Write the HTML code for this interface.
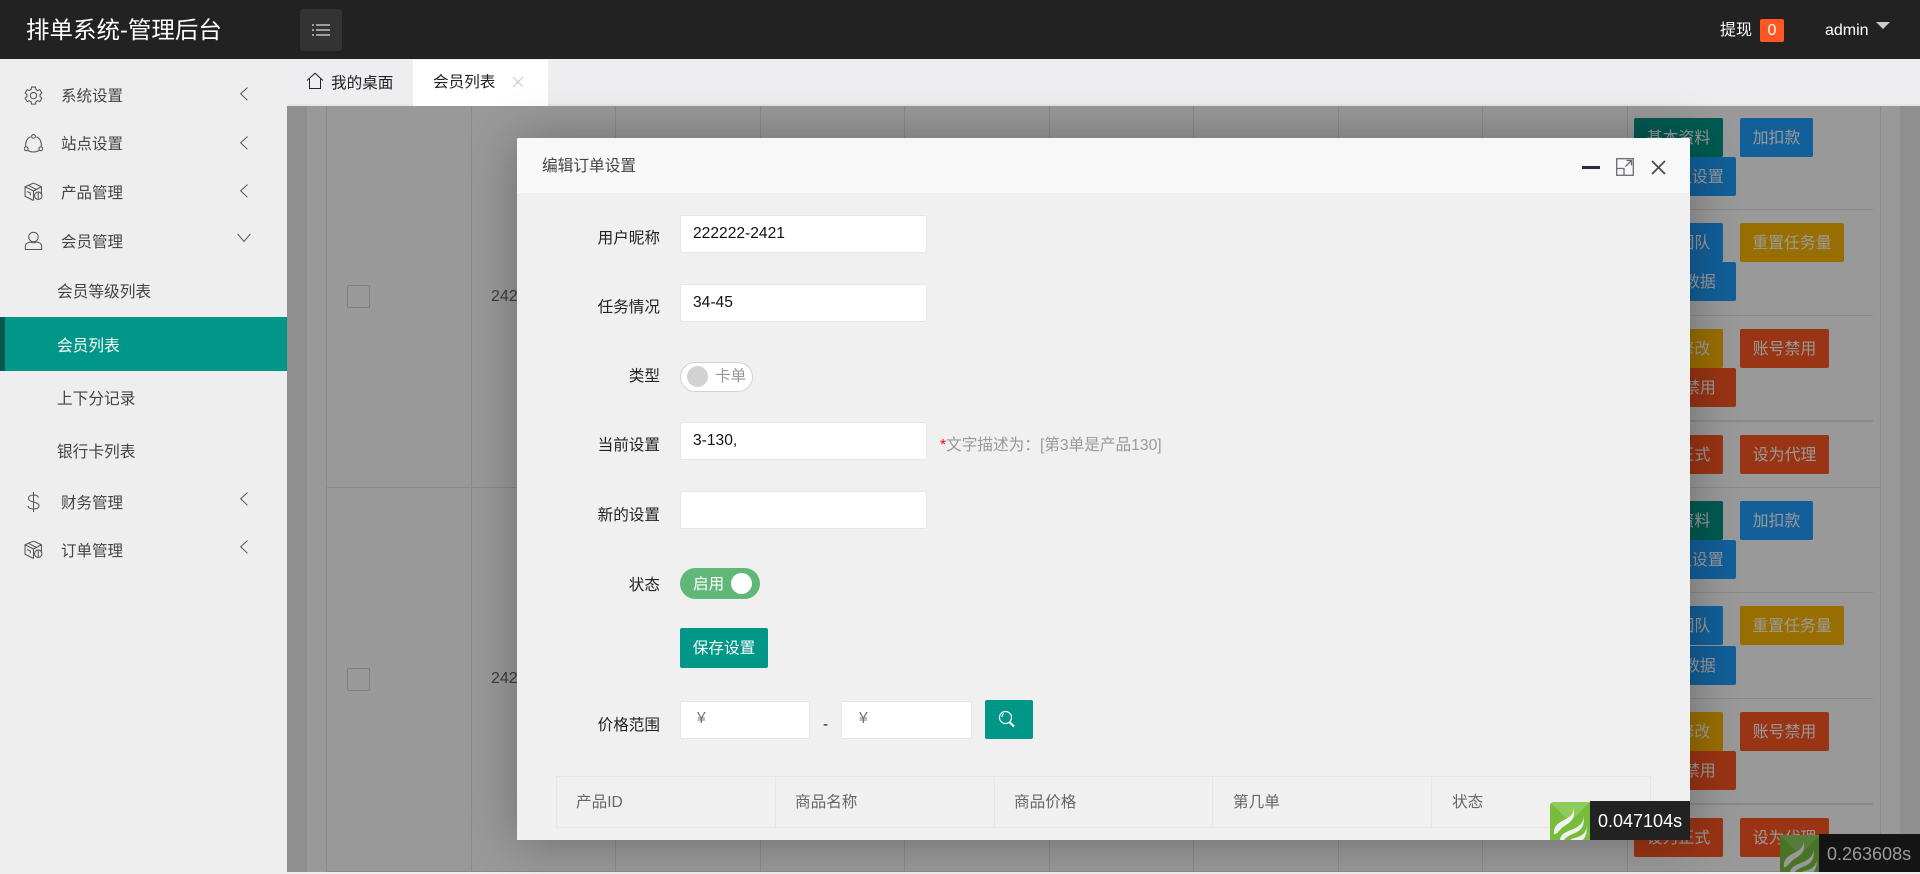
<!DOCTYPE html>
<html lang="zh"><head><meta charset="utf-8"><title>排单系统-管理后台</title>
<style>
html,body{margin:0;padding:0;width:1920px;height:872px;overflow:hidden;background:#eee;font-family:"Liberation Sans","Noto Sans CJK SC",sans-serif;color:#333}
div,span,svg{position:absolute;box-sizing:border-box}
.t{white-space:nowrap;line-height:30px;height:30px}
.m{font-size:15.5px;color:#444}
.s{font-size:15.7px;color:#444}
.l{font-size:15.6px;color:#222;text-align:right;width:120px;left:540px}
.in{background:#fff;border:1px solid #e6e6e6;border-radius:2px;height:38px}
.v{font-size:15.6px;color:#111;left:693px}
.b{height:39px;line-height:41px;border-radius:2px;color:#fff;font-size:15.9px;text-align:center;white-space:nowrap}
.g{background:#009688}.bl{background:#1E9FFF}.o{background:#FFB800}.r{background:#FF5722}
.vl{top:106px;bottom:0;width:1px;background:#e6e6e6}
.hl{left:1627px;width:246px;height:1px;background:#e6e6e6}
.th{font-size:15.6px;color:#666;top:788px}
svg.ic{fill:none;stroke:#555;stroke-width:1}
</style></head><body>
<!-- header -->
<div style="left:0;top:0;width:1920px;height:59px;background:#222"></div>
<div class="t" style="left:26px;top:15px;font-size:23.5px;color:#fff">排单系统-管理后台</div>
<div style="left:300px;top:9px;width:42px;height:42px;background:#333;border-radius:3px"></div>
<svg style="left:311px;top:23px" width="20" height="14" fill="none" stroke="#ddd" stroke-width="1.2"><path d="M5 2h14M5 7h14M5 12h14M1 2h2M1 7h2M1 12h2"/></svg>
<div class="t" style="left:1720px;top:16px;font-size:16px;color:#fff">提现</div>
<div style="left:1760px;top:19px;width:24px;height:23px;background:#FF5722;border-radius:2px;color:#fff;font-size:16px;line-height:23px;text-align:center">0</div>
<div class="t" style="left:1825px;top:16px;font-size:16px;color:#fff">admin</div>
<svg style="left:1876px;top:22px" width="14" height="8"><path d="M0 0h14L7 7z" fill="#ccc"/></svg>

<!-- sidebar -->
<div style="left:0;top:59px;width:287px;height:813px;background:#eee"></div>
<svg class="ic" style="left:24px;top:86px" width="19" height="19" viewBox="0 0 18 18"><path d="M7.2 1h3.6l.5 2.3 1.6.9 2.2-.7 1.8 3.1-1.7 1.6v1.8l1.7 1.6-1.8 3.1-2.2-.7-1.6.9-.5 2.3H7.2l-.5-2.3-1.6-.9-2.2.7-1.8-3.1 1.7-1.6V8.2L1.1 6.6l1.8-3.1 2.2.7 1.6-.9z"/><circle cx="9" cy="9.1" r="3"/></svg>
<div class="t m" style="left:61px;top:82px">系统设置</div>
<svg class="ic" style="left:24px;top:134px" width="19" height="19" viewBox="0 0 18 18"><path d="M6.3 2.6C3.2 3.8 1.4 6.6 1.6 11.8M11.7 2.6c3.100 1.200 4.900 4 4.700 9.200M3.500 15.300c3 2.300 8 2.300 11 0"/><circle cx="9" cy="2.200" r="1.800"/><circle cx="2" cy="14" r="1.800"/><circle cx="16" cy="14" r="1.800"/></svg>
<div class="t m" style="left:61px;top:130px">站点设置</div>
<svg class="ic" style="left:24px;top:182px" width="19" height="19" viewBox="0 0 18 18"><path d="M9 1l7.500 3.500V12M9 1L1 4.500v9L9 17.500M1 4.500L9 8.500l7.500-4M9 8.500v9M4 3l7.500 4M3 9l3 1.500v2"/><circle cx="13.500" cy="13" r="3.500"/><path d="M13.500 9.500v7"/></svg>
<div class="t m" style="left:61px;top:179px">产品管理</div>
<svg class="ic" style="left:24px;top:231px" width="19" height="19" viewBox="0 0 18 19"><circle cx="9" cy="6" r="4.800"/><path d="M.8 18.500v-3C.8 13 3 11.500 5.500 11c2.200 1 4.800 1 7 0 2.500.5 4.700 2 4.700 4.500v3z"/></svg>
<div class="t m" style="left:61px;top:228px">会员管理</div>
<svg class="ic" style="left:240px;top:87px" width="8" height="14"><path d="M7.500.5L.7 6.800l6.800 6.500"/></svg>
<svg class="ic" style="left:240px;top:136px" width="8" height="14"><path d="M7.500.5L.7 6.800l6.800 6.500"/></svg>
<svg class="ic" style="left:240px;top:184px" width="8" height="14"><path d="M7.500.5L.7 6.800l6.800 6.500"/></svg>
<svg class="ic" style="left:237px;top:233px" width="14" height="10"><path d="M.5.800L7 8.500 13.500.8"/></svg>
<div class="t s" style="left:57px;top:278px">会员等级列表</div>
<div style="left:0;top:317px;width:287px;height:54px;background:#009688"></div>
<div style="left:0;top:317px;width:5px;height:54px;background:#04584f"></div>
<div class="t s" style="left:57px;top:332px;color:#fff">会员列表</div>
<div class="t s" style="left:57px;top:385px">上下分记录</div>
<div class="t s" style="left:57px;top:438px">银行卡列表</div>
<svg class="ic" style="left:27px;top:492px" width="13" height="20" viewBox="0 0 13 20"><path d="M11.500 5.500C11 3.500 9 3 6.500 3S1.500 4 1.500 6.300 4 9.300 6.500 10s5.500 1.500 5.500 3.800-2.500 3.200-5.500 3.200-5-1-5.500-3M6.500 0v20"/></svg>
<div class="t m" style="left:61px;top:489px">财务管理</div>
<svg class="ic" style="left:240px;top:492px" width="8" height="14"><path d="M7.500.5L.7 6.800l6.800 6.500"/></svg>
<svg class="ic" style="left:24px;top:540px" width="19" height="19" viewBox="0 0 18 18"><path d="M9 1l7.500 3.500V12M9 1L1 4.500v9L9 17.500M1 4.500L9 8.500l7.500-4M9 8.500v9M4 3l7.500 4M3 9l3 1.500v2"/><circle cx="13.500" cy="13" r="3.500"/><path d="M13.500 9.500v7"/></svg>
<div class="t m" style="left:61px;top:537px">订单管理</div>
<svg class="ic" style="left:240px;top:540px" width="8" height="14"><path d="M7.500.5L.7 6.800l6.800 6.500"/></svg>

<!-- tabs -->
<div style="left:287px;top:59px;width:1633px;height:47px;background:#eeeef0;border-bottom:2px solid #e6e6e6"></div>
<svg style="left:306px;top:72px" width="18" height="18" viewBox="0 0 18 18" fill="none" stroke="#222" stroke-width="1"><path d="M1 8.500L9 1.200l8 7.300M3.500 7v9.500h11V7"/></svg>
<div class="t" style="left:331px;top:69px;font-size:15.6px;color:#222">我的桌面</div>
<div style="left:413px;top:60px;width:135px;height:46px;background:#fff"></div>
<div class="t" style="left:433px;top:68px;font-size:15.6px;color:#222">会员列表</div>
<svg style="left:512px;top:76px" width="12" height="12" fill="none" stroke="#ccc" stroke-width="1.200"><path d="M1 1l10 10M11 1L1 11"/></svg>

<!-- content under overlay -->
<div style="left:287px;top:106px;width:1633px;height:766px;background:#eee"></div>
<div style="left:307px;top:106px;width:1593px;height:766px;background:#fff"></div>
<div class="vl" style="left:326px"></div><div class="vl" style="left:471px"></div><div class="vl" style="left:615px"></div><div class="vl" style="left:760px"></div><div class="vl" style="left:904px"></div><div class="vl" style="left:1049px"></div><div class="vl" style="left:1193px"></div><div class="vl" style="left:1338px"></div><div class="vl" style="left:1482px"></div><div class="vl" style="left:1627px"></div><div class="vl" style="left:1880px"></div>
<div style="left:326px;top:487px;width:1554px;height:1px;background:#e6e6e6"></div>
<div style="left:326px;top:871px;width:1554px;height:1px;background:#e6e6e6"></div>
<div class="hl" style="top:209px"></div><div class="hl" style="top:315px"></div><div class="hl" style="top:420px;height:2px"></div>
<div class="hl" style="top:592px"></div><div class="hl" style="top:698px"></div><div class="hl" style="top:803px;height:2px"></div>
<div style="left:347px;top:285px;width:23px;height:23px;border:1px solid #d2d2d2;border-radius:2px;background:#fff"></div>
<div style="left:347px;top:668px;width:23px;height:23px;border:1px solid #d2d2d2;border-radius:2px;background:#fff"></div>
<div class="t" style="left:491px;top:282px;font-size:16px;color:#666">2421</div>
<div class="t" style="left:491px;top:664px;font-size:16px;color:#666">2421</div>

<div class="b g" style="left:1634px;top:118px;width:89px">基本资料</div>
<div class="b bl" style="left:1740px;top:118px;width:73px">加扣款</div>
<div class="b bl" style="left:1632px;top:157px;width:104px">订单组设置</div>
<div class="b bl" style="left:1634px;top:223px;width:89px">查看团队</div>
<div class="b o" style="left:1740px;top:223px;width:104px">重置任务量</div>
<div class="b bl" style="left:1632px;top:262px;width:104px">今日数据</div>
<div class="b o" style="left:1634px;top:329px;width:89px">密码修改</div>
<div class="b r" style="left:1740px;top:329px;width:89px">账号禁用</div>
<div class="b r" style="left:1632px;top:368px;width:104px">接单禁用</div>
<div class="b r" style="left:1634px;top:435px;width:89px">设为正式</div>
<div class="b r" style="left:1740px;top:435px;width:89px">设为代理</div>

<div class="b g" style="left:1634px;top:501px;width:89px">基本资料</div>
<div class="b bl" style="left:1740px;top:501px;width:73px">加扣款</div>
<div class="b bl" style="left:1632px;top:540px;width:104px">订单组设置</div>
<div class="b bl" style="left:1634px;top:606px;width:89px">查看团队</div>
<div class="b o" style="left:1740px;top:606px;width:104px">重置任务量</div>
<div class="b bl" style="left:1632px;top:646px;width:104px">今日数据</div>
<div class="b o" style="left:1634px;top:712px;width:89px">密码修改</div>
<div class="b r" style="left:1740px;top:712px;width:89px">账号禁用</div>
<div class="b r" style="left:1632px;top:751px;width:104px">接单禁用</div>
<div class="b r" style="left:1634px;top:818px;width:89px">设为正式</div>
<div class="b r" style="left:1740px;top:818px;width:89px">设为代理</div>

<!-- bottom trace widget under overlay -->
<svg style="left:1780px;top:835px" width="40" height="37" viewBox="0 0 40 37"><rect width="40" height="37" fill="#7ac143"/><path d="M0 0h40L20 20z" fill="#92cf5f"/><path d="M23 6C24 12 20 15 14 18 8 21 3 25 4 32 7 33 9 28 13 25 19 21 27 17 23 6Z" fill="#fff"/><path d="M33 13C35 20 29 25 21 28 15 30 10 33 10 38L14 38C16 35 20 33 25 31 30 29 36 24 33 13Z" fill="#fff"/><path d="M36 24C37 30 33 33 28 35 24 36 20 37 18 40H30C35 37 38 31 36 24Z" fill="#fff"/></svg>
<div style="left:1819px;top:834px;width:101px;height:38px;background:#222;color:#fff;font-size:18px;line-height:40px;padding-left:8px">0.263608s</div>

<!-- overlay -->
<div style="left:287px;top:106px;width:1633px;height:766px;background:rgba(0,0,0,.4)"></div>

<!-- modal -->
<div style="left:517px;top:138px;width:1173px;height:702px;background:#f0f0f0;box-shadow:1px 1px 50px rgba(0,0,0,.3);border-radius:2px 2px 0 0;overflow:hidden">
<div style="left:0;top:0;width:1173px;height:56px;background:#f8f8f8;border-bottom:1px solid #eee"></div>
</div>
<div class="t" style="left:542px;top:152px;font-size:15.7px;color:#444">编辑订单设置</div>
<div style="left:1582px;top:166px;width:18px;height:3px;background:#2e2d3c"></div>
<svg style="left:1616px;top:158px" width="18" height="18" fill="none" stroke="#6a6a74" stroke-width="1.300"><rect x=".7" y=".7" width="16.600" height="16.600"/><path d="M1 10.500h7v6.800M9.500 8.500l6-6M10.500 2.500h5v5"/></svg>
<svg style="left:1651px;top:160px" width="15" height="15" fill="none" stroke="#4a4955" stroke-width="1.800"><path d="M1 1l13 13M14 1L1 14"/></svg>

<div class="t l" style="top:224px">用户昵称</div>
<div class="in" style="left:680px;top:215px;width:247px"></div>
<div class="t v" style="top:219px">222222-2421</div>
<div class="t l" style="top:293px">任务情况</div>
<div class="in" style="left:680px;top:284px;width:247px"></div>
<div class="t v" style="top:288px">34-45</div>
<div class="t l" style="top:362px">类型</div>
<div style="left:680px;top:362px;width:73px;height:30px;border:1px solid #d2d2d2;border-radius:20px;background:#fff"></div>
<div style="left:687px;top:366px;width:21px;height:21px;border-radius:50%;background:#d2d2d2"></div>
<div class="t" style="left:715px;top:362px;font-size:15.600px;color:#999">卡单</div>
<div class="t l" style="top:431px">当前设置</div>
<div class="in" style="left:680px;top:422px;width:247px"></div>
<div class="t v" style="top:426px">3-130,</div>
<div class="t" style="left:940px;top:431px;font-size:15.650px;color:#999"><span style="position:static;color:#f00">*</span>文字描述为：[第3单是产品130]</div>
<div class="t l" style="top:501px">新的设置</div>
<div class="in" style="left:680px;top:491px;width:247px"></div>
<div class="t l" style="top:571px">状态</div>
<div style="left:680px;top:568px;width:80px;height:31px;border-radius:20px;background:#5FB878"></div>
<div class="t" style="left:693px;top:570px;font-size:15.600px;color:#fff">启用</div>
<div style="left:731px;top:573px;width:21px;height:21px;border-radius:50%;background:#fff"></div>
<div style="left:680px;top:628px;width:88px;height:40px;background:#009688;border-radius:2px;color:#fff;font-size:15.600px;line-height:41px;text-align:center">保存设置</div>
<div class="t l" style="top:711px">价格范围</div>
<div class="in" style="left:680px;top:701px;width:130px"></div>
<div class="t" style="left:697px;top:704px;font-size:15.600px;color:#757575">¥</div>
<div class="t" style="left:823px;top:710px;font-size:15.600px;color:#222">-</div>
<div class="in" style="left:841px;top:701px;width:131px"></div>
<div class="t" style="left:859px;top:704px;font-size:15.600px;color:#757575">¥</div>
<div style="left:985px;top:700px;width:48px;height:39px;background:#009688;border-radius:2px"></div>
<svg style="left:998px;top:710px" width="19" height="19" fill="none" stroke="#fff" stroke-width="1.200"><circle cx="7.500" cy="7.500" r="6"/><path d="M11.500 12l4.500 4.500" stroke-width="2.200"/><path d="M4 7c0-2 1-3 2-3.500"/></svg>

<div style="left:556px;top:776px;width:1095px;height:52px;border:1px solid #e6e6e6"></div>
<div style="left:775px;top:776px;width:1px;height:52px;background:#e6e6e6"></div>
<div style="left:994px;top:776px;width:1px;height:52px;background:#e6e6e6"></div>
<div style="left:1212px;top:776px;width:1px;height:52px;background:#e6e6e6"></div>
<div style="left:1431px;top:776px;width:1px;height:52px;background:#e6e6e6"></div>
<div class="t th" style="left:576px">产品ID</div>
<div class="t th" style="left:795px">商品名称</div>
<div class="t th" style="left:1014px">商品价格</div>
<div class="t th" style="left:1233px">第几单</div>
<div class="t th" style="left:1452px">状态</div>

<!-- modal trace widget -->
<div style="left:1550px;top:802px;width:40px;height:38px;overflow:hidden;border-radius:4px 0 0 0"><svg style="left:0;top:0" width="40" height="40" viewBox="0 0 40 40"><rect width="40" height="40" fill="#76bd3a"/><path d="M0 0h40L20 20z" fill="#8fcb5c"/><path d="M23 6C24 12 20 15 14 18 8 21 3 25 4 32 7 33 9 28 13 25 19 21 27 17 23 6Z" fill="#f1f1f1"/><path d="M33 13C35 20 29 25 21 28 15 30 10 33 10 38L14 38C16 35 20 33 25 31 30 29 36 24 33 13Z" fill="#f1f1f1"/><path d="M36 24C37 30 33 33 28 35 24 36 20 37 18 40H30C35 37 38 31 36 24Z" fill="#f1f1f1"/></svg></div>
<div style="left:1590px;top:801px;width:100px;height:39px;background:#222;color:#fff;font-size:18px;line-height:41px;padding-left:8px">0.047104s</div>
</body></html>
